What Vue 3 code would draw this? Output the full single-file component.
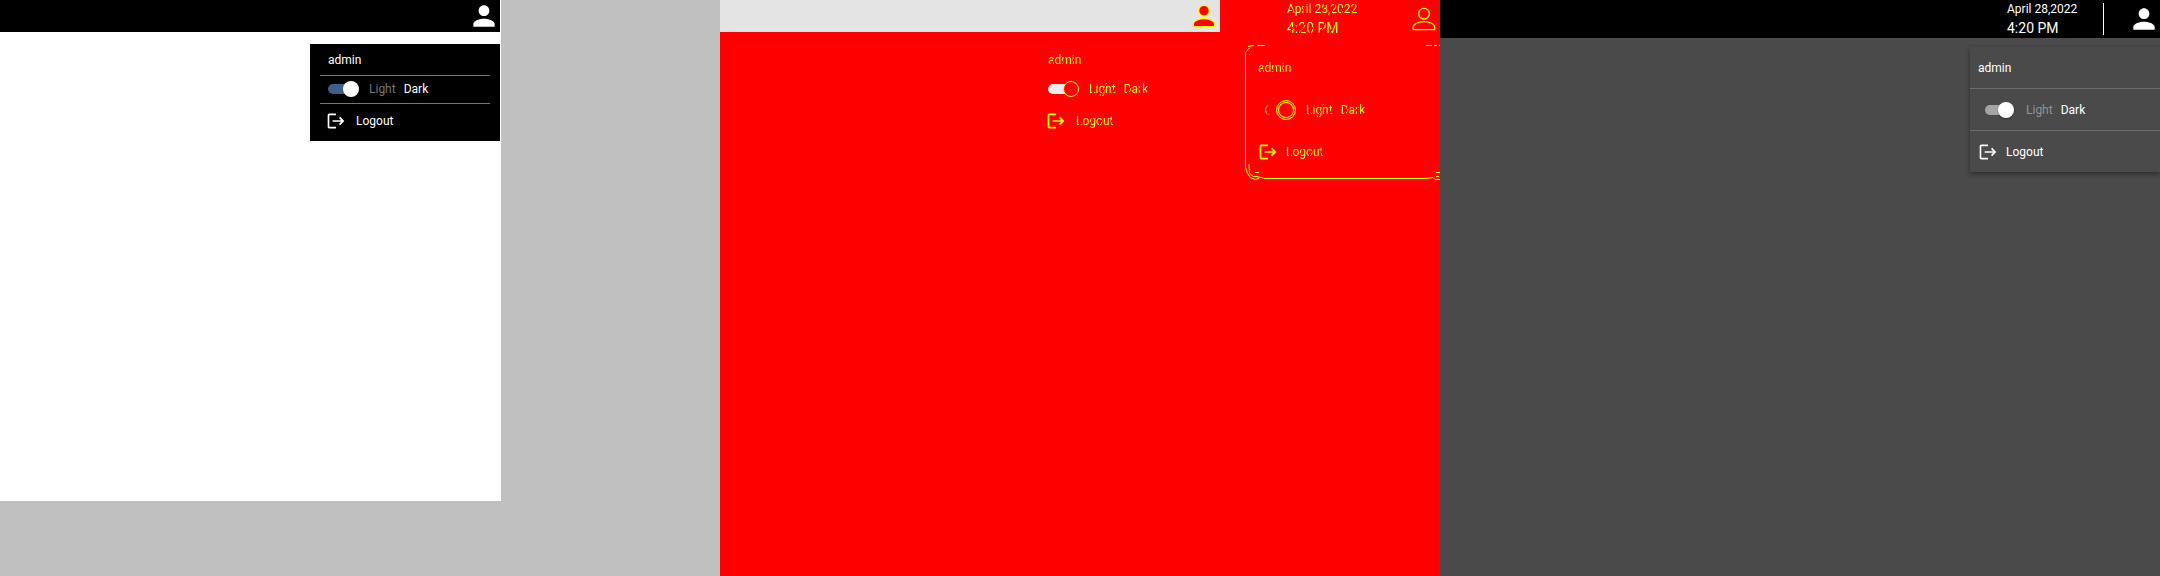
<script setup>
import { reactive } from 'vue'

const panes = reactive([
  { id: 'before', clock: false, menus: [{ kind: 'compact', dark: true }] },
  { id: 'diff', clock: true, menus: [{ kind: 'compact', dark: true }, { kind: 'roomy', dark: true }] },
  { id: 'after', clock: true, menus: [{ kind: 'roomy', dark: true }] }
])
const personPath = 'M12 12c2.21 0 4-1.79 4-4s-1.79-4-4-4-4 1.79-4 4 1.79 4 4 4zm0 2c-2.67 0-8 1.34-8 4v2h16v-2c0-2.66-5.33-4-8-4z'
const logoutPath = 'M17 7l-1.41 1.41L18.17 11H8v2h10.17l-2.58 2.58L17 17l5-5zM4 5h8V3H4c-1.1 0-2 .9-2 2v14c0 1.1.9 2 2 2h8v-2H4V5z'
</script>

<template>
  <main class="compare">
    <section v-for="pane in panes" :key="pane.id" class="pane" :class="pane.id">
      <div class="canvas">
        <header class="bar">
          <div v-if="pane.id !== 'after'" class="strip">
            <button class="user" type="button" aria-label="Account">
              <svg viewBox="0 0 24 24"><path :d="personPath" /></svg>
            </button>
          </div>
          <div v-if="pane.clock" class="status">
            <div class="clock">
              <span class="date"><span class="ink">April 28,2022</span></span>
              <span class="time"><span class="ink">4:20 PM</span></span>
            </div>
            <span class="rule"></span>
            <button class="user" type="button" aria-label="Account">
              <svg viewBox="0 0 24 24"><path :d="personPath" /></svg>
            </button>
          </div>
        </header>
        <div v-for="menu in pane.menus" :key="menu.kind" class="menu" :class="menu.kind">
          <svg v-if="pane.id === 'diff' && menu.kind === 'roomy'" class="edges" viewBox="0 0 196 138">
            <path d="M1.5 123V8.5L5.5 4M4 2.5L10 1.5M13 1.5H21M182 1.5H188M190 1.5H193M195 1.5H196M5 10.5H6" />
            <path d="M1.5 123L3 128L6 133.500L11 135.500L15 134.500M5 120L5.500 129L9 132.500H13L21 134.500H182L189 133.500L191 135.500H196M195 132.500H192M192 128.500H196M11 128.500H15" />
          </svg>
          <div class="row name"><span class="ink">admin</span></div>
          <div class="row theme">
            <input :id="pane.id + menu.kind" v-model="menu.dark" class="switch" type="checkbox" />
            <label class="choices" :for="pane.id + menu.kind">
              <span class="light ink">Light</span>
              <span class="dark ink">Dark</span>
            </label>
          </div>
          <button class="row logout" type="button">
            <svg viewBox="0 0 24 24"><path :d="logoutPath" /></svg>
            <span class="ink">Logout</span>
          </button>
        </div>
      </div>
    </section>
  </main>
</template>

<style>
body {
  background: #c0c0c0;
}
</style>

<style scoped>
.compare {
  display: grid;
  grid-template-columns: repeat(3, 1fr);
  min-height: 100vh;
  font: 12px/16px Roboto, sans-serif;
  color: #fff;
}
.pane {
  background: #c0c0c0;
  overflow: hidden;
}
.canvas {
  position: relative;
  height: 100%;
}
button {
  border: 0;
  margin: 0;
  padding: 0;
  background: none;
  color: inherit;
  font: inherit;
  text-align: left;
}
svg {
  display: block;
  fill: currentColor;
}
.bar {
  display: flex;
}
.strip {
  flex: 1;
  height: 32px;
  display: flex;
  justify-content: flex-end;
  background: #000;
}
.user svg {
  width: 32px;
  height: 32px;
}
.status {
  display: flex;
  align-items: center;
  justify-content: flex-end;
  height: 38px;
}
.clock {
  display: flex;
  flex-direction: column;
  width: 96px;
}
.date {
  line-height: 18px;
}
.time {
  font-size: 14px;
  line-height: 20px;
}
.rule {
  width: 1px;
  height: 32px;
  margin-right: 24px;
  background: #fff;
}

.menu {
  position: absolute;
  right: 0;
  box-sizing: border-box;
  width: 190px;
}
.row {
  display: flex;
  align-items: center;
  box-sizing: border-box;
  width: 100%;
}
.logout svg {
  width: 20px;
  height: 20px;
}
.choices {
  display: flex;
  gap: 8px;
}
.light {
  color: #757575;
}
.switch {
  appearance: none;
  display: flex;
  align-items: center;
  width: 26px;
  height: 10px;
  margin: 0;
  border-radius: 5px;
  background: #3e5f8a;
}
.switch::before {
  content: '';
  box-sizing: border-box;
  width: 16px;
  height: 16px;
  flex: none;
  border-radius: 50%;
  background: #fff;
}
.switch:checked::before {
  margin-left: 15px;
}

.compact {
  top: 44px;
  padding: 0 10px;
  background: #000;
}
.compact .row {
  padding-left: 8px;
}
.compact .name {
  height: 32px;
  border-bottom: 1px solid #757575;
}
.compact .theme {
  height: 28px;
  padding-bottom: 2px;
  border-bottom: 1px solid #757575;
}
.compact .switch {
  margin-right: 15px;
}
.compact .logout {
  height: 37px;
  padding-left: 6px;
  padding-bottom: 4px;
  gap: 10px;
}

.roomy {
  top: 47px;
  background: #4a4a4a;
  box-shadow: 0 2px 5px rgba(0, 0, 0, 0.4);
}
.roomy .row {
  height: 42px;
  padding-left: 8px;
}
.roomy .name,
.roomy .theme {
  border-bottom: 1px solid #6b6b6b;
}
.roomy .logout {
  height: 41px;
  gap: 8px;
}
.roomy .theme {
  padding-left: 15px;
}
.roomy .light {
  color: #929292;
}
.roomy .switch {
  margin-right: 15px;
  background: #a5a5a5;
}
.roomy .switch:checked::before {
  margin-left: 13px;
  box-shadow: 0 1px 2px rgba(0, 0, 0, 0.4);
}

.before .canvas {
  width: calc(100% - 219px);
  height: 501px;
  background: #fff;
}
.before .bar,
.before .menu {
  margin-right: 1px;
}

.diff {
  background: #f00;
  color: #ff0;
}
.diff .strip {
  background: #e4e4e4;
}
.diff .status {
  width: 220px;
}
.diff .rule {
  background: none;
}
.diff .user path {
  fill: #f00;
  stroke: #ff0;
  stroke-width: 1;
}
.diff .menu {
  background: none;
  box-shadow: none;
}
.diff .compact {
  right: 220px;
}
.diff .row {
  border-color: transparent;
}
/* Changed pixels break the letters up into yellow, pale and red specks. */
.diff .ink {
  color: transparent;
  background: repeating-linear-gradient(115deg, #ff0 0 4px, #ffe 4px 5px, #ff0 5px 8px, #f00 8px 9px);
  background-clip: text;
  -webkit-background-clip: text;
}
.diff .switch {
  background: #ececec;
}
.diff .switch::before {
  border: 1px solid #ff0;
  background: #f00;
}
.edges {
  position: absolute;
  left: -6px;
  top: -3px;
  width: 196px;
  height: 138px;
  fill: none;
  stroke: #ff0;
  pointer-events: none;
}
.diff .roomy .switch {
  background: none;
  border-left: 1px solid #ff0;
}
.diff .roomy .switch:checked::before {
  width: 20px;
  height: 20px;
  margin-left: 10px;
  border: 1px solid #ff0;
  background: #f00;
  box-shadow: inset 0 0 0 1px #f00, inset 0 0 0 2px #ff0;
}

.after {
  background: #4a4a4a;
}
.after .bar {
  justify-content: flex-end;
  background: #000;
}
</style>
